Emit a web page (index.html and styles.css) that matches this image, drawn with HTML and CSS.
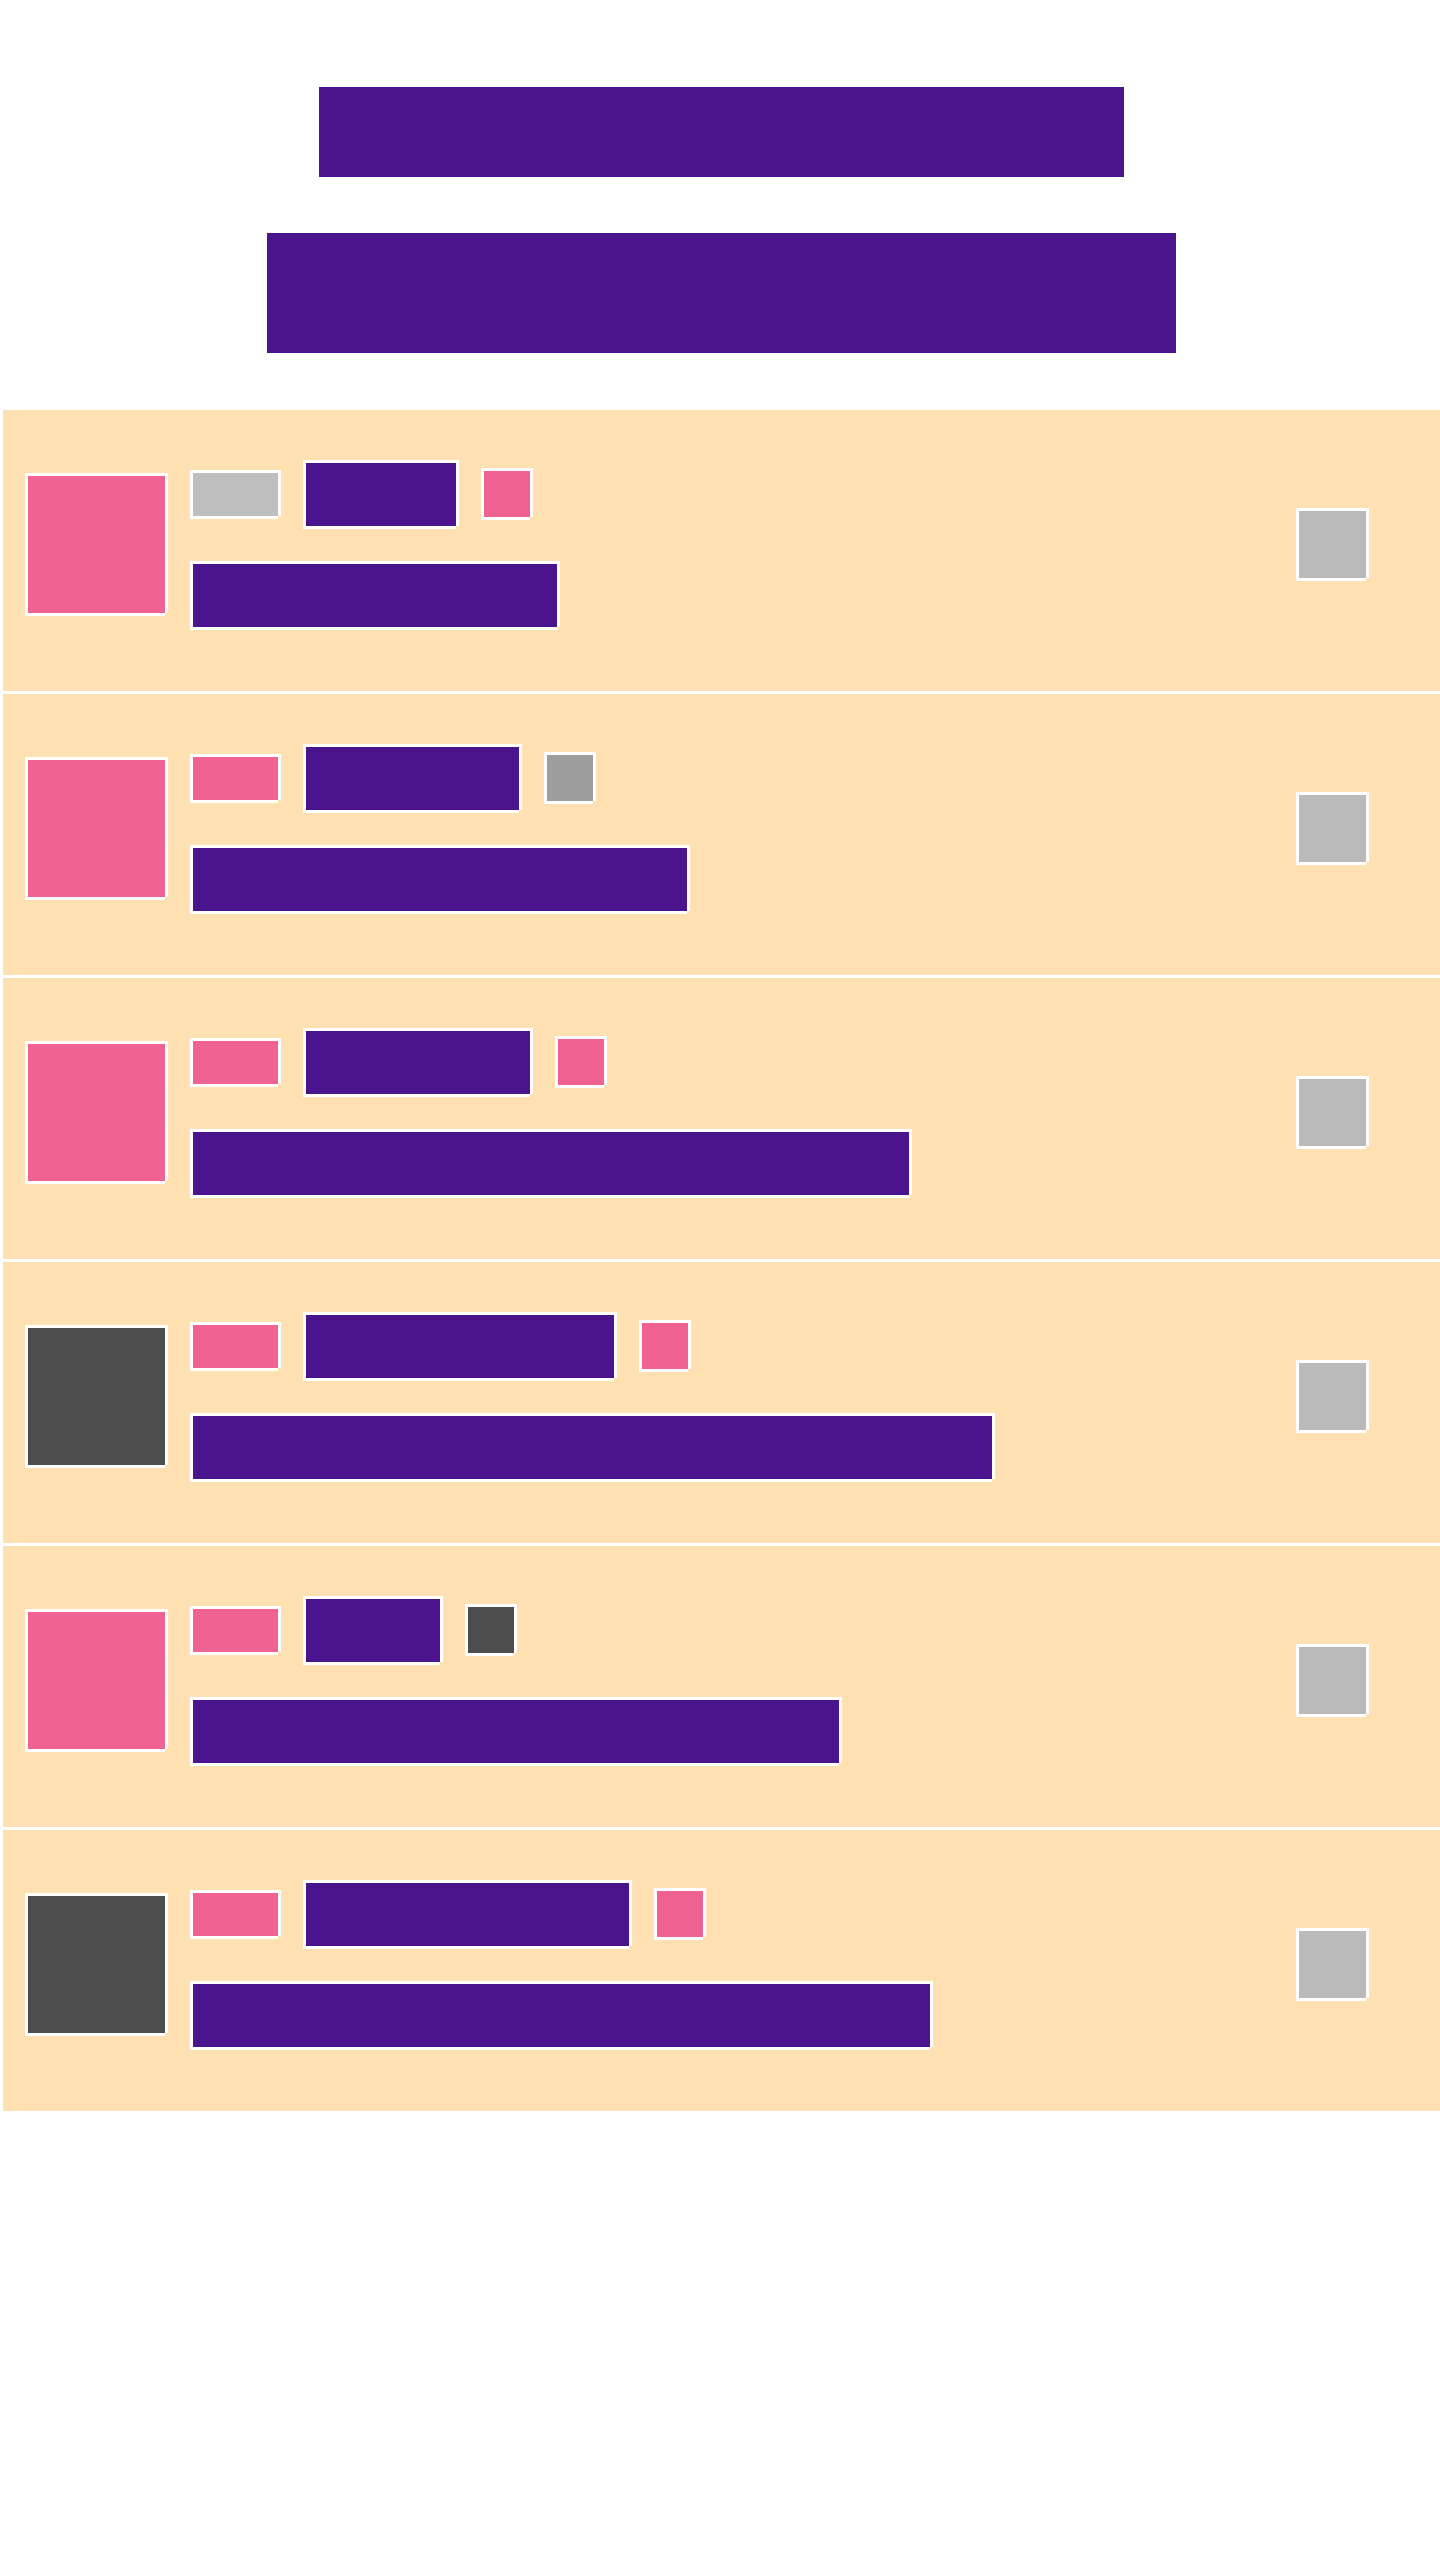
FILE: index.html
```html
<!DOCTYPE html>
<html lang="en">
<head>
<meta charset="utf-8">
<title>List</title>
<link rel="stylesheet" href="styles.css">
</head>
<body>
<div class="page">
  <header class="hero">
    <div class="hero-title"></div>
    <div class="hero-sub"></div>
  </header>
  <ul class="list">
    <li class="item">
      <div class="blk avatar pink"></div>
      <div class="info">
        <div class="line">
          <div class="blk tag gray"></div>
          <div class="blk title" style="width:153px"></div>
          <div class="blk mini pink"></div>
        </div>
        <div class="blk bar" style="width:367px"></div>
      </div>
      <div class="blk action"></div>
    </li>
    <li class="item">
      <div class="blk avatar pink"></div>
      <div class="info">
        <div class="line">
          <div class="blk tag pink"></div>
          <div class="blk title" style="width:216px"></div>
          <div class="blk mini mid"></div>
        </div>
        <div class="blk bar" style="width:497px"></div>
      </div>
      <div class="blk action"></div>
    </li>
    <li class="item">
      <div class="blk avatar pink"></div>
      <div class="info">
        <div class="line">
          <div class="blk tag pink"></div>
          <div class="blk title" style="width:227px"></div>
          <div class="blk mini pink"></div>
        </div>
        <div class="blk bar" style="width:719px"></div>
      </div>
      <div class="blk action"></div>
    </li>
    <li class="item">
      <div class="blk avatar dark"></div>
      <div class="info">
        <div class="line">
          <div class="blk tag pink"></div>
          <div class="blk title" style="width:311px"></div>
          <div class="blk mini pink"></div>
        </div>
        <div class="blk bar" style="width:802px"></div>
      </div>
      <div class="blk action"></div>
    </li>
    <li class="item">
      <div class="blk avatar pink"></div>
      <div class="info">
        <div class="line">
          <div class="blk tag pink"></div>
          <div class="blk title" style="width:137px"></div>
          <div class="blk mini dark"></div>
        </div>
        <div class="blk bar" style="width:649px"></div>
      </div>
      <div class="blk action"></div>
    </li>
    <li class="item">
      <div class="blk avatar dark"></div>
      <div class="info">
        <div class="line">
          <div class="blk tag pink"></div>
          <div class="blk title" style="width:326px"></div>
          <div class="blk mini pink"></div>
        </div>
        <div class="blk bar" style="width:740px"></div>
      </div>
      <div class="blk action"></div>
    </li>
  </ul>
</div>
</body>
</html>
```
FILE: styles.css
```css
html, body {
  margin: 0;
  padding: 0;
  background: #fefefe;
  font-family: "Liberation Sans", Arial, sans-serif;
}

.page {
  min-height: 2560px;
  padding-left: 3px;
  box-sizing: border-box;
}

.hero {
  display: flex;
  flex-direction: column;
  align-items: center;
  gap: 56px;
  padding: 87px 0 57px;
}

.hero-title {
  width: 805px;
  height: 90px;
  background: #4a148c;
}

.hero-sub {
  width: 909px;
  height: 120px;
  background: #4a148c;
}

.list {
  list-style: none;
  margin: 0;
  padding: 0;
  display: flex;
  flex-direction: column;
  gap: 3px;
  background: #ffffff;
}

.item {
  display: flex;
  align-items: flex-start;
  gap: 25px;
  height: 281px;
  box-sizing: border-box;
  padding: 50px 74px 64px 22px;
  background: #ffe0b2;
}

.blk {
  box-sizing: border-box;
  border-top: 3px solid #ffffff;
  border-left: 3px solid #ffffff;
  box-shadow: 3px 0 0 #ffffff, 0 3px 0 #ffffff;
  flex: none;
}

.avatar {
  width: 140px;
  height: 140px;
  margin-top: 13px;
}

.info {
  display: flex;
  flex-direction: column;
  align-items: flex-start;
  gap: 35px;
  flex: 1;
}

.line {
  display: flex;
  align-items: flex-start;
  gap: 25px;
}

.tag {
  width: 88px;
  height: 46px;
  margin-top: 10px;
}

.title {
  height: 66px;
  background: #4a148c;
}

.mini {
  width: 49px;
  height: 49px;
  margin-top: 8px;
}

.bar {
  height: 66px;
  background: #4a148c;
}

.action {
  width: 70px;
  height: 70px;
  margin-top: 48px;
  background: #bababa;
}

.pink { background: #f06292; }
.gray { background: #bebebe; }
.mid { background: #9e9e9e; }
.dark { background: #4d4d4d; }
```
